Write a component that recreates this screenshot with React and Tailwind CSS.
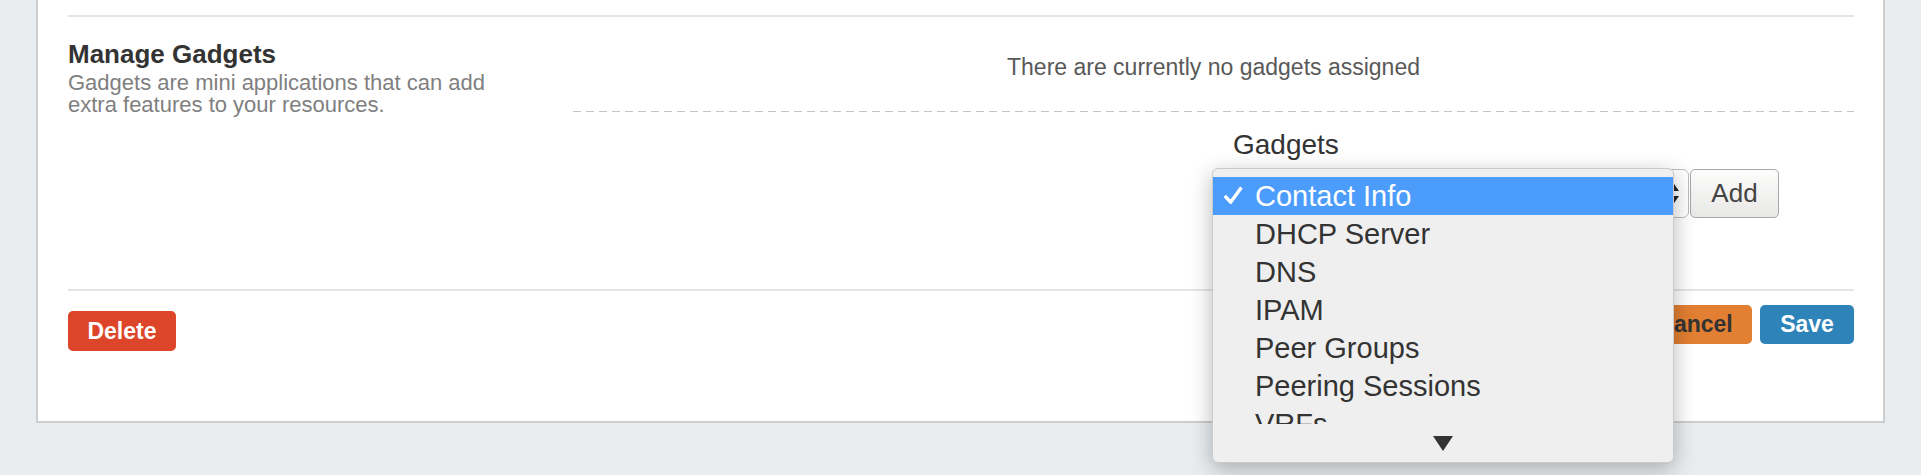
const GADGETS = ['Contact Info', 'DHCP Server', 'DNS', 'IPAM', 'Peer Groups', 'Peering Sessions', 'VRFs']

const GadgetMenu = () => (
  <div className="absolute left-[1212px] top-[168px] h-[295px] w-[462px] overflow-hidden rounded-[6px] border border-[#cbcbcb] bg-[#efefef] pt-[8px] shadow-[0_6px_22px_rgba(0,0,0,0.28)]">
    <div className="h-[247px] overflow-hidden">
      {GADGETS.map((name, i) => (
        <div
          key={name}
          className={`relative h-[38px] pl-[42px] text-[29px] leading-[38px] ${
            i === 0 ? 'bg-[#4c9cfb] text-white' : 'text-[#333]'
          }`}
        >
          {i === 0 && (
            <svg className="absolute left-[10px] top-[9px]" width="20" height="18" viewBox="0 0 20 18">
              <path d="M1.8 9.8 L7.6 16.2 L18.4 1.6" fill="none" stroke="#fff" strokeWidth="3.4" strokeLinejoin="round" />
            </svg>
          )}
          {name}
        </div>
      ))}
    </div>
    <div className="flex h-[38px] items-center justify-center">
      <svg width="20" height="15" viewBox="0 0 20 15">
        <polygon points="0,0 20,0 10,15" fill="#333" />
      </svg>
    </div>
  </div>
)

export default function App() {
  return (
    <div className="relative min-h-[475px] bg-[#e9edf0] font-['Liberation_Sans',Arial,sans-serif]">
      <div className="ml-[36px] h-[423px] w-[1849px] border-x-2 border-b-2 border-[#cdcdcd] bg-white pl-[30px] pr-[29px] pt-[15px]">
        <div className="h-[2px] bg-[#e5e5e5]" />

        {/* Manage Gadgets */}
        <div className="grid grid-cols-[505px_1fr]">
          <div className="pt-[22px]">
            <h3 className="text-[26px] font-bold leading-[30px] text-[#333]">Manage Gadgets</h3>
            <p className="mt-[3px] max-w-[450px] text-[22px] leading-[22px] text-[#808080]">
              Gadgets are mini applications that can add extra features to your resources.
            </p>
          </div>
          <div className="pt-[34px]">
            <p className="text-center text-[23px] leading-[32px] text-[#595959]">
              There are currently no gadgets assigned
            </p>
            <div className="mt-[28px] h-px bg-[image:repeating-linear-gradient(to_right,#c4c4c4_0_8px,transparent_8px_13px)]" />
            <div className="pl-[660px] pt-[17px]">
              <label className="block text-[28px] leading-[32px] text-[#333]">Gadgets</label>
              <div className="mt-[8px] flex gap-px">
                <div className="relative h-[49px] w-[456px] rounded-[6px] border border-[#bdbdbd] bg-white">
                  <svg className="absolute right-[9px] top-[11px]" width="14" height="25" viewBox="0 0 14 25">
                    <polygon points="7,0 14,10 0,10" fill="#222" />
                    <polygon points="0,15 14,15 7,25" fill="#222" />
                  </svg>
                </div>
                <button className="h-[49px] w-[89px] rounded-[5px] border-[1.5px] border-[#a9a9a9] bg-linear-to-b from-[#fdfdfd] to-[#e8e8e6] text-[26px] text-[#444]">
                  Add
                </button>
              </div>
            </div>
          </div>
        </div>

        <div className="mt-[71px] h-[2px] bg-[#e5e5e5]" />

        {/* Actions */}
        <div className="flex items-start justify-between">
          <button className="mt-[20px] h-[40px] w-[108px] rounded-[5px] bg-[#dc4529] text-[23px] font-bold text-white">
            Delete
          </button>
          <div className="mt-[14px] flex gap-[8px]">
            <button className="h-[39px] w-[114px] rounded-[5px] bg-[#e27f32] text-[23px] font-bold text-[#333]">
              Cancel
            </button>
            <button className="h-[39px] w-[94px] rounded-[5px] bg-[#2e83b9] text-[23px] font-bold text-white">
              Save
            </button>
          </div>
        </div>
      </div>

      <GadgetMenu />
    </div>
  )
}
